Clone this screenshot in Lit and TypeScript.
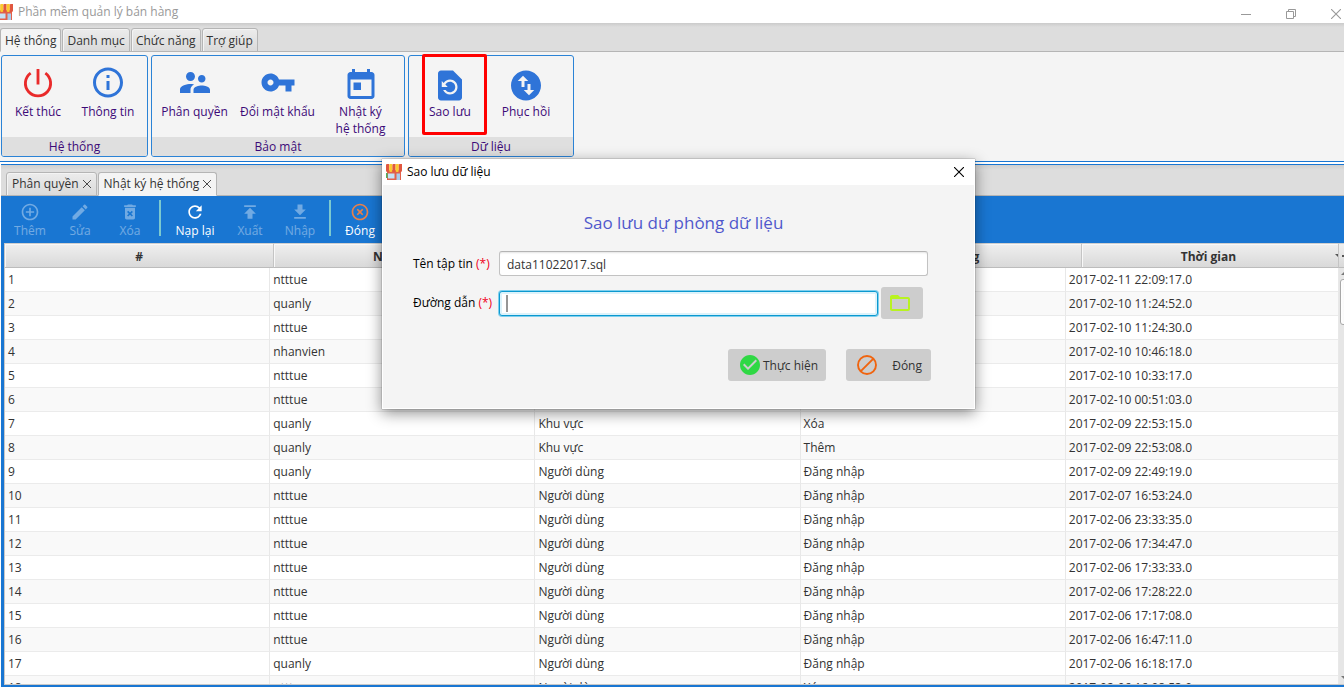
import { LitElement, html, css, svg, nothing } from "lit";
import { customElement, property, state } from "lit/decorators.js";

const RING = "M12 2C6.48 2 2 6.48 2 12s4.48 10 10 10 10-4.48 10-10S17.52 2 12 2z";
const RING_HOLE = "m0 18c-4.41 0-8-3.59-8-8s3.59-8 8-8 8 3.59 8 8-3.59 8-8 8z";

const ICONS: Record<string, string> = {
  info: `${RING}${RING_HOLE}M11 17h2v-6h-2v6zM11 9h2V7h-2v2z`,
  people:
    "M16.5 12c1.38 0 2.49-1.12 2.49-2.5S17.88 7 16.5 7C15.12 7 14 8.12 14 9.5s1.12 2.5 2.5 2.5zM9 11c1.66 0 2.99-1.34 2.99-3S10.66 5 9 5C7.34 5 6 6.34 6 8s1.34 3 3 3zm7.5 3c-1.83 0-5.5.92-5.5 2.75V19h11v-2.25c0-1.83-3.67-2.75-5.5-2.75zM9 13c-2.33 0-7 1.17-7 3.5V19h7v-2.25c0-.85.33-2.34 2.37-3.47C10.5 13.1 9.66 13 9 13z",
  key: "M12.65 10C11.83 7.67 9.61 6 7 6c-3.31 0-6 2.69-6 6s2.69 6 6 6c2.61 0 4.83-1.67 5.65-4H17v4h4v-4h2v-4H12.65zM7 14c-1.1 0-2-.9-2-2s.9-2 2-2 2 .9 2 2-.9 2-2 2z",
  today:
    "M19 3h-1V1h-2v2H8V1H6v2H5c-1.11 0-1.99.9-1.99 2L3 19c0 1.1.89 2 2 2h14c1.1 0 2-.9 2-2V5c0-1.1-.9-2-2-2zm0 16H5V8h14v11zM7 10h5v5H7z",
  restore:
    "M14 2H6c-1.1 0-1.99.9-1.99 2L4 20c0 1.1.89 2 1.99 2H18c1.1 0 2-.9 2-2V8l-6-6zm-2 16c-2.05 0-3.81-1.24-4.58-3h1.71c.63.9 1.68 1.5 2.87 1.5 1.93 0 3.5-1.57 3.5-3.5S13.93 9.5 12 9.5c-1.35 0-2.52.78-3.1 1.9l1.6 1.6h-4V9l1.3 1.3C8.69 8.92 10.23 8 12 8c2.76 0 5 2.24 5 5s-2.24 5-5 5z",
  swap: "M12 2C6.48 2 2 6.48 2 12s4.48 10 10 10 10-4.48 10-10S17.52 2 12 2zM6.5 9L10 5.5 13.5 9H11v4H9V9H6.5zm11 6L14 18.5 10.5 15H13v-4h2v4h2.5z",
  add: `${RING}${RING_HOLE}M13 7h-2v4H7v2h4v4h2v-4h4v-2h-4V7z`,
  edit: "M3 17.25V21h3.75L17.81 9.94l-3.75-3.75L3 17.25zM20.71 7.04c.39-.39.39-1.02 0-1.41l-2.34-2.34c-.39-.39-1.02-.39-1.41 0l-1.83 1.83 3.75 3.75 1.83-1.83z",
  trash:
    "M6 19c0 1.1.9 2 2 2h8c1.1 0 2-.9 2-2V7H6v12zm2.46-7.12l1.41-1.41L12 12.59l2.12-2.12 1.41 1.41L13.41 14l2.12 2.12-1.41 1.41L12 15.41l-2.12 2.12-1.41-1.41L10.59 14l-2.13-2.12zM15.5 4l-1-1h-5l-1 1H5v2h14V4z",
  refresh:
    "M17.65 6.35C16.2 4.9 14.21 4 12 4c-4.42 0-7.99 3.58-7.99 8s3.57 8 7.99 8c3.73 0 6.84-2.55 7.73-6h-2.08c-.82 2.33-3.04 4-5.65 4-3.31 0-6-2.69-6-6s2.69-6 6-6c1.66 0 3.14.69 4.22 1.78L13 11h7V4l-2.35 2.35z",
  upload: "M5 4v2h14V4H5zm0 10h4v6h6v-6h4l-7-7-7 7z",
  download: "M19 9h-4V3H9v6H5l7 7 7-7zM5 18v2h14v-2H5z",
  cancel: `${RING}${RING_HOLE}M14.59 8L12 10.59 9.41 8 8 9.41 10.59 12 8 14.59 9.41 16 12 13.41 14.59 16 16 14.59 13.41 12 16 9.41 14.59 8z`,
  folder:
    "M20 6h-8l-2-2H4c-1.1 0-1.99.9-1.99 2L2 18c0 1.1.9 2 2 2h16c1.1 0 2-.9 2-2V8c0-1.1-.9-2-2-2zm0 12H4V8h16v10z",
  check: `${RING}m-2 15l-5-5 1.41-1.41L10 14.17l7.59-7.59L19 8l-9 9z`,
};

function icon(name: string, box = "0 0 24 24") {
  if (name === "power") {
    return html`<svg class="icon power" viewBox=${box} aria-hidden="true">
      <path fill="none" stroke="currentColor" stroke-width="1.9" d="M7.1 4.7a8.4 8.4 0 1 0 9.8 0M12 2v10.3"></path>
    </svg>`;
  }
  if (name === "block") {
    return html`<svg class="icon block" viewBox=${box} aria-hidden="true">
      <path fill="none" stroke="currentColor" stroke-width="1.9" d="M21 12a9 9 0 1 1-18 0a9 9 0 0 1 18 0zM5.6 18.4L18.4 5.6"></path>
    </svg>`;
  }
  return html`<svg class="icon" viewBox=${box} aria-hidden="true">
    <path fill="currentColor" fill-rule="evenodd" d=${ICONS[name]}></path>
  </svg>`;
}

const cross = (cls: string) => html`<svg class=${cls} viewBox="0 0 10 10" aria-hidden="true">
  <path d="M0 0L10 10M10 0L0 10" fill="none" stroke="currentColor" stroke-width="1.1"></path>
</svg>`;

const shop = () => html`<svg class="shop" viewBox="0 0 16 16" aria-hidden="true">
  <rect x="1" y="6" width="14" height="10" fill="#e2604a"></rect>
  ${[0, 1, 2, 3, 4].map(
    (i) => svg`<path d="M${i * 3.2} 1q0-1 1-1h2.2v6.5q0 1.5-1.6 1.5t-1.6-1.5z" fill=${i % 2 ? "#fbca2f" : "#e0573f"}></path>`
  )}
  <rect x="2" y="9.5" width="6.5" height="5" fill="#c6e2f7"></rect>
  <rect x="10.5" y="9.5" width="3.5" height="6.5" fill="#a9cdec"></rect>
  <rect x="0" y="9" width="1.6" height="5" fill="#4fae5e"></rect>
</svg>`;

interface RibbonItem {
  icon: string;
  label: string[];
  box?: string;
}

const RIBBON: { title: string; size: string; items: RibbonItem[]; marked?: boolean }[] = [
  {
    title: "Hệ thống",
    size: "small",
    items: [
      { icon: "power", label: ["Kết thúc"] },
      { icon: "info", label: ["Thông tin"], box: "0 1 24 24" },
    ],
  },
  {
    title: "Bảo mật",
    size: "large",
    items: [
      { icon: "people", label: ["Phân quyền"], box: "0 1 24 24" },
      { icon: "key", label: ["Đổi mật khẩu"], box: "0 1 24 24" },
      { icon: "today", label: ["Nhật ký", "hệ thống"], box: "0 -1 24 24" },
    ],
  },
  {
    title: "Dữ liệu",
    size: "medium",
    marked: true,
    items: [
      { icon: "restore", label: ["Sao lưu"], box: "0 -1 24 24" },
      { icon: "swap", label: ["Phục hồi"], box: "0 -1 24 24" },
    ],
  },
];

const TOOLS: ({ icon: string; label: string; off?: boolean; cls?: string } | null)[] = [
  { icon: "add", label: "Thêm", off: true },
  { icon: "edit", label: "Sửa", off: true },
  { icon: "trash", label: "Xóa", off: true },
  null,
  { icon: "refresh", label: "Nạp lại", cls: "wide" },
  { icon: "upload", label: "Xuất", off: true },
  { icon: "download", label: "Nhập", off: true },
  null,
  { icon: "cancel", label: "Đóng", cls: "close" },
];

const ROWS: string[][] = [
  ["ntttue", "Người dùng", "Đăng nhập", "2017-02-11 22:09:17.0"],
  ["quanly", "Người dùng", "Đăng nhập", "2017-02-10 11:24:52.0"],
  ["ntttue", "Người dùng", "Đăng nhập", "2017-02-10 11:24:30.0"],
  ["nhanvien", "Người dùng", "Đăng nhập", "2017-02-10 10:46:18.0"],
  ["ntttue", "Người dùng", "Đăng nhập", "2017-02-10 10:33:17.0"],
  ["ntttue", "Người dùng", "Đăng nhập", "2017-02-10 00:51:03.0"],
  ["quanly", "Khu vực", "Xóa", "2017-02-09 22:53:15.0"],
  ["quanly", "Khu vực", "Thêm", "2017-02-09 22:53:08.0"],
  ["quanly", "Người dùng", "Đăng nhập", "2017-02-09 22:49:19.0"],
  ["ntttue", "Người dùng", "Đăng nhập", "2017-02-07 16:53:24.0"],
  ["ntttue", "Người dùng", "Đăng nhập", "2017-02-06 23:33:35.0"],
  ["ntttue", "Người dùng", "Đăng nhập", "2017-02-06 17:34:47.0"],
  ["ntttue", "Người dùng", "Đăng nhập", "2017-02-06 17:33:33.0"],
  ["ntttue", "Người dùng", "Đăng nhập", "2017-02-06 17:28:22.0"],
  ["ntttue", "Người dùng", "Đăng nhập", "2017-02-06 17:17:08.0"],
  ["ntttue", "Người dùng", "Đăng nhập", "2017-02-06 16:47:11.0"],
  ["quanly", "Người dùng", "Đăng nhập", "2017-02-06 16:18:17.0"],
  ["ntttue", "Người dùng", "Xóa", "2017-02-06 16:08:53.0"],
];

const base = css`
  :host {
    font: 12px/16px "Open Sans", "Noto Sans", sans-serif;
    color: #333;
  }
  * {
    box-sizing: border-box;
  }
  button {
    font: inherit;
    color: inherit;
    border: 0;
    padding: 0;
    background: none;
  }
  .icon {
    display: block;
    flex: none;
  }
  .shop {
    width: 16px;
    height: 16px;
    flex: none;
  }
`;

@customElement("backup-dialog")
export class BackupDialog extends LitElement {
  @property() filename = "data11022017.sql";
  @state() private path = "";

  static styles = [
    base,
    css`
      .window {
        position: absolute;
        left: 382px;
        top: 159px;
        margin: 0;
        padding: 0;
        width: 593px;
        border: 0;
        background: #f4f4f4;
        color: #000;
        box-shadow: 0 0 1px rgba(0, 0, 0, 0.6), 0 4px 14px rgba(0, 0, 0, 0.45);
      }
      .bar {
        display: flex;
        align-items: center;
        gap: 5px;
        height: 26px;
        padding: 0 11px 0 4px;
        background: #fff;
      }
      .caption {
        flex: 1;
      }
      .x {
        display: block;
        width: 10px;
        height: 10px;
      }
      .form {
        display: flex;
        flex-direction: column;
        padding: 24px 43px 27px 30px;
        border: 1px solid #fff;
        border-top: 0;
      }
      .title {
        margin: 0 0 14px;
        padding-left: 23px;
        font-size: 17px;
        line-height: 28px;
        font-weight: 400;
        text-align: center;
        color: #5058cc;
      }
      .field {
        display: flex;
        align-items: center;
      }
      .first {
        padding-right: 3px;
        margin-bottom: 11px;
      }
      .label {
        width: 86px;
        flex: none;
      }
      .req {
        color: #f00020;
      }
      .input {
        flex: 1;
        min-width: 0;
        height: 25px;
        padding: 1px 7px 0;
        font: inherit;
        color: #333;
        border: 1px solid #c2c2c2;
        border-top-color: #b4b4b4;
        border-radius: 3px;
        background: #fff;
        box-shadow: inset 0 2px 2px -1px #e4e4e4;
        outline: none;
      }
      .focused {
        flex: 1;
        display: flex;
        align-items: center;
        height: 25px;
        padding: 0 6px;
        border: 1px solid #0c98cf;
        border-radius: 3px;
        background: #fff;
        box-shadow: 0 0 0 1px #7fd0ee, inset 0 0 0 2px #dcf3fb;
      }
      .focused .input {
        height: 17px;
        padding: 0 4px;
        border: 0;
        border-left: 2px solid #969696;
        border-radius: 0;
        box-shadow: none;
      }
      .btn {
        display: flex;
        align-items: center;
        height: 32px;
        border-radius: 3px;
        background: #cdcdcd;
        color: #333;
      }
      .btn .icon {
        width: 24px;
        height: 24px;
      }
      .btn span {
        padding-top: 2px;
      }
      .browse {
        width: 42px;
        margin-left: 3px;
        margin-right: 8px;
        padding-left: 7px;
        color: #b8f320;
      }
      .actions {
        display: flex;
        justify-content: flex-end;
        gap: 20px;
        margin-top: 30px;
      }
      .run {
        padding: 0 8px 0 10px;
        gap: 1px;
      }
      .run .icon {
        color: #2fd844;
      }
      .quit {
        padding: 0 9px;
        gap: 13px;
      }
      .quit .icon {
        color: #f0640f;
      }
    `,
  ];

  render() {
    return html`<dialog open class="window" aria-labelledby="caption">
      <div class="bar">
        ${shop()}<span class="caption" id="caption">Sao lưu dữ liệu</span>
        <button aria-label="Đóng cửa sổ">${cross("x")}</button>
      </div>
      <form class="form" @submit=${(e: Event) => e.preventDefault()}>
        <h2 class="title">Sao lưu dự phòng dữ liệu</h2>
        <div class="field first">
          <label class="label" for="file">Tên tập tin <span class="req">(*)</span></label>
          <input class="input" id="file" type="text" .value=${this.filename} />
        </div>
        <div class="field">
          <label class="label" for="path">Đường dẫn <span class="req">(*)</span></label>
          <span class="focused">
            <input
              class="input"
              id="path"
              type="text"
              .value=${this.path}
              @input=${(e: Event) => (this.path = (e.target as HTMLInputElement).value)}
            />
          </span>
          <button type="button" class="btn browse" aria-label="Chọn thư mục">${icon("folder")}</button>
        </div>
        <div class="actions">
          <button type="submit" class="btn run">${icon("check")}<span>Thực hiện</span></button>
          <button type="button" class="btn quit">${icon("block")}<span>Đóng</span></button>
        </div>
      </form>
    </dialog>`;
  }
}

@customElement("log-table")
export class LogTable extends LitElement {
  static styles = [
    base,
    css`
      :host {
        display: flex;
        flex: 1;
        min-height: 0;
        overflow: hidden;
        background: #fff;
        border-left: 1px solid #c8c8c8;
        border-bottom: 1px solid #c8c8c8;
        box-sizing: border-box;
      }
      .table {
        display: block;
        flex: 1;
      }
      .head,
      .body {
        display: block;
      }
      .hrow {
        display: grid;
        grid-template-columns: repeat(4, 269fr) 257fr;
        height: 25px;
      }
      .th {
        padding: 5px 0 0;
        line-height: 16px;
        font-weight: 700;
        text-align: center;
        border-right: 1px solid #c4c4c4;
        border-bottom: 1px solid #bcbcbc;
        border-top: 1px solid #cfcfcf;
        background: linear-gradient(#efefef, #d9d9d9);
        box-shadow: inset 1px 1px 0 #f8f8f8;
      }
      .sorted {
        display: flex;
        align-items: center;
        padding: 0;
      }
      .sorted span {
        flex: 1;
        padding-top: 2px;
      }
      .sorted::after {
        content: "";
        border: 3px solid transparent;
        border-right-width: 0;
        border-bottom-width: 0;
        border-top-color: #555;
      }
      .row {
        display: grid;
        grid-template-columns: repeat(4, 265fr) 273fr;
        height: 24px;
        background: #fff;
      }
      .row:nth-child(even) {
        background: #f9f9f9;
      }
      .td {
        padding: 4px 3px;
        line-height: 16px;
        border-right: 1px solid #e8e8e8;
        border-bottom: 1px solid #ebebeb;
        overflow: hidden;
        white-space: nowrap;
      }
      .side {
        display: flex;
        flex-direction: column;
        width: 5px;
        flex: none;
        overflow: hidden;
        background: #e6e6e6;
      }
      .corner {
        display: flex;
        align-items: center;
        height: 25px;
        flex: none;
        padding-left: 3px;
        border-top: 1px solid #cfcfcf;
        border-bottom: 1px solid #bcbcbc;
        background: linear-gradient(#efefef, #d9d9d9);
      }
      .corner::before {
        content: "";
        width: 4px;
        height: 2px;
        flex: none;
        background: #555;
      }
      .arrow {
        width: 8px;
        height: 4px;
        margin: 3px 0 4px 2px;
        flex: none;
      }
      .thumb {
        width: 14px;
        height: 46px;
        margin-left: 1px;
        flex: none;
        border: 1px solid #a8a8a8;
        border-radius: 3px;
        background: linear-gradient(90deg, #fff, #e8e8e8);
      }
      .fill {
        flex: 1;
      }
    `,
  ];

  render() {
    const heads = ["#", "Người dùng", "Chức năng", "Hành động"];
    return html`<table class="table">
        <thead class="head">
          <tr class="hrow">
            ${heads.map((h) => html`<th class="th" scope="col">${h}</th>`)}
            <th class="th sorted" scope="col" aria-sort="descending"><span>Thời gian</span></th>
          </tr>
        </thead>
        <tbody class="body">
          ${ROWS.map(
            (r, i) => html`<tr class="row">
              <td class="td">${i + 1}</td>
              ${r.map((c) => html`<td class="td">${c}</td>`)}
            </tr>`
          )}
        </tbody>
      </table>
      <div class="side" aria-hidden="true">
        <div class="corner"></div>
        <svg class="arrow" viewBox="0 0 8 4"><path d="M0 4L4 0L8 4z" fill="#777"></path></svg>
        <div class="thumb"></div>
        <div class="fill"></div>
        <svg class="arrow" viewBox="0 0 8 4"><path d="M0 0L4 4L8 0z" fill="#777"></path></svg>
      </div>`;
  }
}

@customElement("app-root")
export class AppRoot extends LitElement {
  static styles = [
    base,
    css`
      :host {
        display: flex;
        flex-direction: column;
        position: relative;
        height: 100vh;
        overflow: hidden;
        background: #f4f4f4;
      }
      .titlebar {
        display: flex;
        align-items: center;
        gap: 5px;
        height: 23px;
        flex: none;
        padding-right: 3px;
        background: #fff;
        color: #999;
      }
      .titlebar .shop {
        margin-left: -3px;
      }
      .name {
        flex: 1;
        padding-top: 1px;
      }
      .winbtns {
        display: flex;
        align-items: center;
        gap: 35px;
        padding-top: 4px;
      }
      .winbtns svg {
        display: block;
        width: 10px;
        height: 10px;
      }
      .tabs {
        display: flex;
        align-items: flex-end;
        gap: 1px;
        flex: none;
        height: 29px;
        background: linear-gradient(#cbcbcb, #dddddd 4px);
        box-shadow: inset 0 -1px 0 #b5b5b5;
      }
      .tab {
        display: flex;
        align-items: center;
        height: 24px;
        padding: 2px 4px 0;
        border: 1px solid #b5b5b5;
        border-radius: 3px 3px 0 0;
        background: linear-gradient(#ececec, #dadada);
        box-shadow: inset 1px 1px 0 #f4f4f4;
        white-space: nowrap;
      }
      .tab.on {
        background: #f4f4f4;
        border-bottom-color: #f4f4f4;
      }
      .ribbon {
        display: flex;
        gap: 3px;
        flex: none;
        height: 109px;
        padding: 3px 1px 4px;
      }
      .group {
        position: relative;
        display: flex;
        flex-direction: column;
        border: 1px solid #2b83d6;
        border-radius: 3px;
        color: #3c0a78;
        height: 102px;
      }
      .items {
        display: flex;
        flex: 1;
      }
      .small .items {
        padding: 0 4px 0 1px;
      }
      .large .items {
        padding: 0 2px 0 1px;
      }
      .medium .items {
        padding: 0 9px 0 3px;
      }
      .gtitle {
        height: 19px;
        line-height: 20px;
        text-align: center;
        background: #dfdfdf;
        border-radius: 0 0 2px 2px;
      }
      .big {
        display: flex;
        flex-direction: column;
        align-items: center;
        padding-top: 10px;
        gap: 1px;
        line-height: 17px;
        white-space: nowrap;
      }
      .small .big {
        width: 70px;
      }
      .large .big {
        width: 83px;
      }
      .medium .big {
        width: 76px;
      }
      .big .icon {
        width: 36px;
        height: 36px;
        color: #2f74d8;
      }
      .big .power {
        color: #e92a2a;
      }
      .line {
        display: block;
      }
      .marker {
        position: absolute;
        left: 13px;
        top: -2px;
        width: 65px;
        height: 81px;
        border: 3px solid #ff0000;
        border-radius: 2px;
        pointer-events: none;
      }
      .work {
        display: flex;
        flex-direction: column;
        flex: 1;
        min-height: 0;
        border-top: 1px solid #1976d2;
        padding: 2px 0 0 1px;
        background: #fff;
      }
      .tabs.docs {
        border-top: 1px solid #1976d2;
        height: 32px;
        padding-left: 5px;
        background: linear-gradient(#cfcfcf, #dddddd 5px);
      }
      .docs .tab {
        gap: 4px;
        padding: 0 5px;
      }
      .tx {
        width: 8px;
        height: 8px;
      }
      .pane {
        display: flex;
        flex-direction: column;
        flex: 1;
        min-height: 0;
        padding: 0 0 2px 3px;
        background: #1976d2;
      }
      .tools {
        display: flex;
        align-items: flex-start;
        flex: none;
        height: 47px;
        padding: 6px 0 0 1px;
        color: #fff;
      }
      .tool {
        display: flex;
        flex-direction: column;
        align-items: center;
        width: 50px;
        line-height: 18px;
      }
      .tool.wide {
        width: 60px;
      }
      .tool .icon {
        width: 20px;
        height: 20px;
      }
      .tool:disabled {
        color: #fff;
        opacity: 0.38;
      }
      .tool.close .icon {
        color: #e8804a;
      }
      .sep {
        width: 2px;
        height: 36px;
        margin: -2px 4px 0;
        background: #7cc9cf;
      }
    `,
  ];

  render() {
    return html`
      <header class="titlebar">
        ${shop()}<span class="name">Phần mềm quản lý bán hàng</span>
        <div class="winbtns">
          <button aria-label="Thu nhỏ">
            <svg viewBox="0 0 10 10"><path d="M0 5.5h10" stroke="currentColor"></path></svg>
          </button>
          <button aria-label="Khôi phục">
            <svg viewBox="0 0 10 10">
              <path d="M.5 2.5h7v7h-7zM2.5 2.5v-2h7v7h-2" fill="none" stroke="currentColor"></path>
            </svg>
          </button>
          <button aria-label="Đóng">${cross("wx")}</button>
        </div>
      </header>
      <nav class="tabs">
        ${["Hệ thống", "Danh mục", "Chức năng", "Trợ giúp"].map(
          (t, i) => html`<button class="tab ${i === 0 ? "on" : ""}">${t}</button>`
        )}
      </nav>
      <div class="ribbon">
        ${RIBBON.map(
          (g) => html`<section class="group ${g.size}">
            <div class="items">
              ${g.items.map(
                (it) => html`<button class="big">
                  ${icon(it.icon, it.box)}
                  <span>${it.label.map((l) => html`<span class="line">${l}</span>`)}</span>
                </button>`
              )}
            </div>
            <div class="gtitle">${g.title}</div>
            ${g.marked ? html`<div class="marker"></div>` : nothing}
          </section>`
        )}
      </div>
      <main class="work">
        <nav class="tabs docs">
          <button class="tab">Phân quyền ${cross("tx")}</button>
          <button class="tab on">Nhật ký hệ thống ${cross("tx")}</button>
        </nav>
        <div class="pane">
          <div class="tools">
            ${TOOLS.map((t) =>
              t
                ? html`<button class="tool ${t.cls ?? ""}" ?disabled=${t.off}>${icon(t.icon)}<span>${t.label}</span></button>`
                : html`<span class="sep"></span>`
            )}
          </div>
          <log-table></log-table>
        </div>
      </main>
      <backup-dialog></backup-dialog>
    `;
  }
}
